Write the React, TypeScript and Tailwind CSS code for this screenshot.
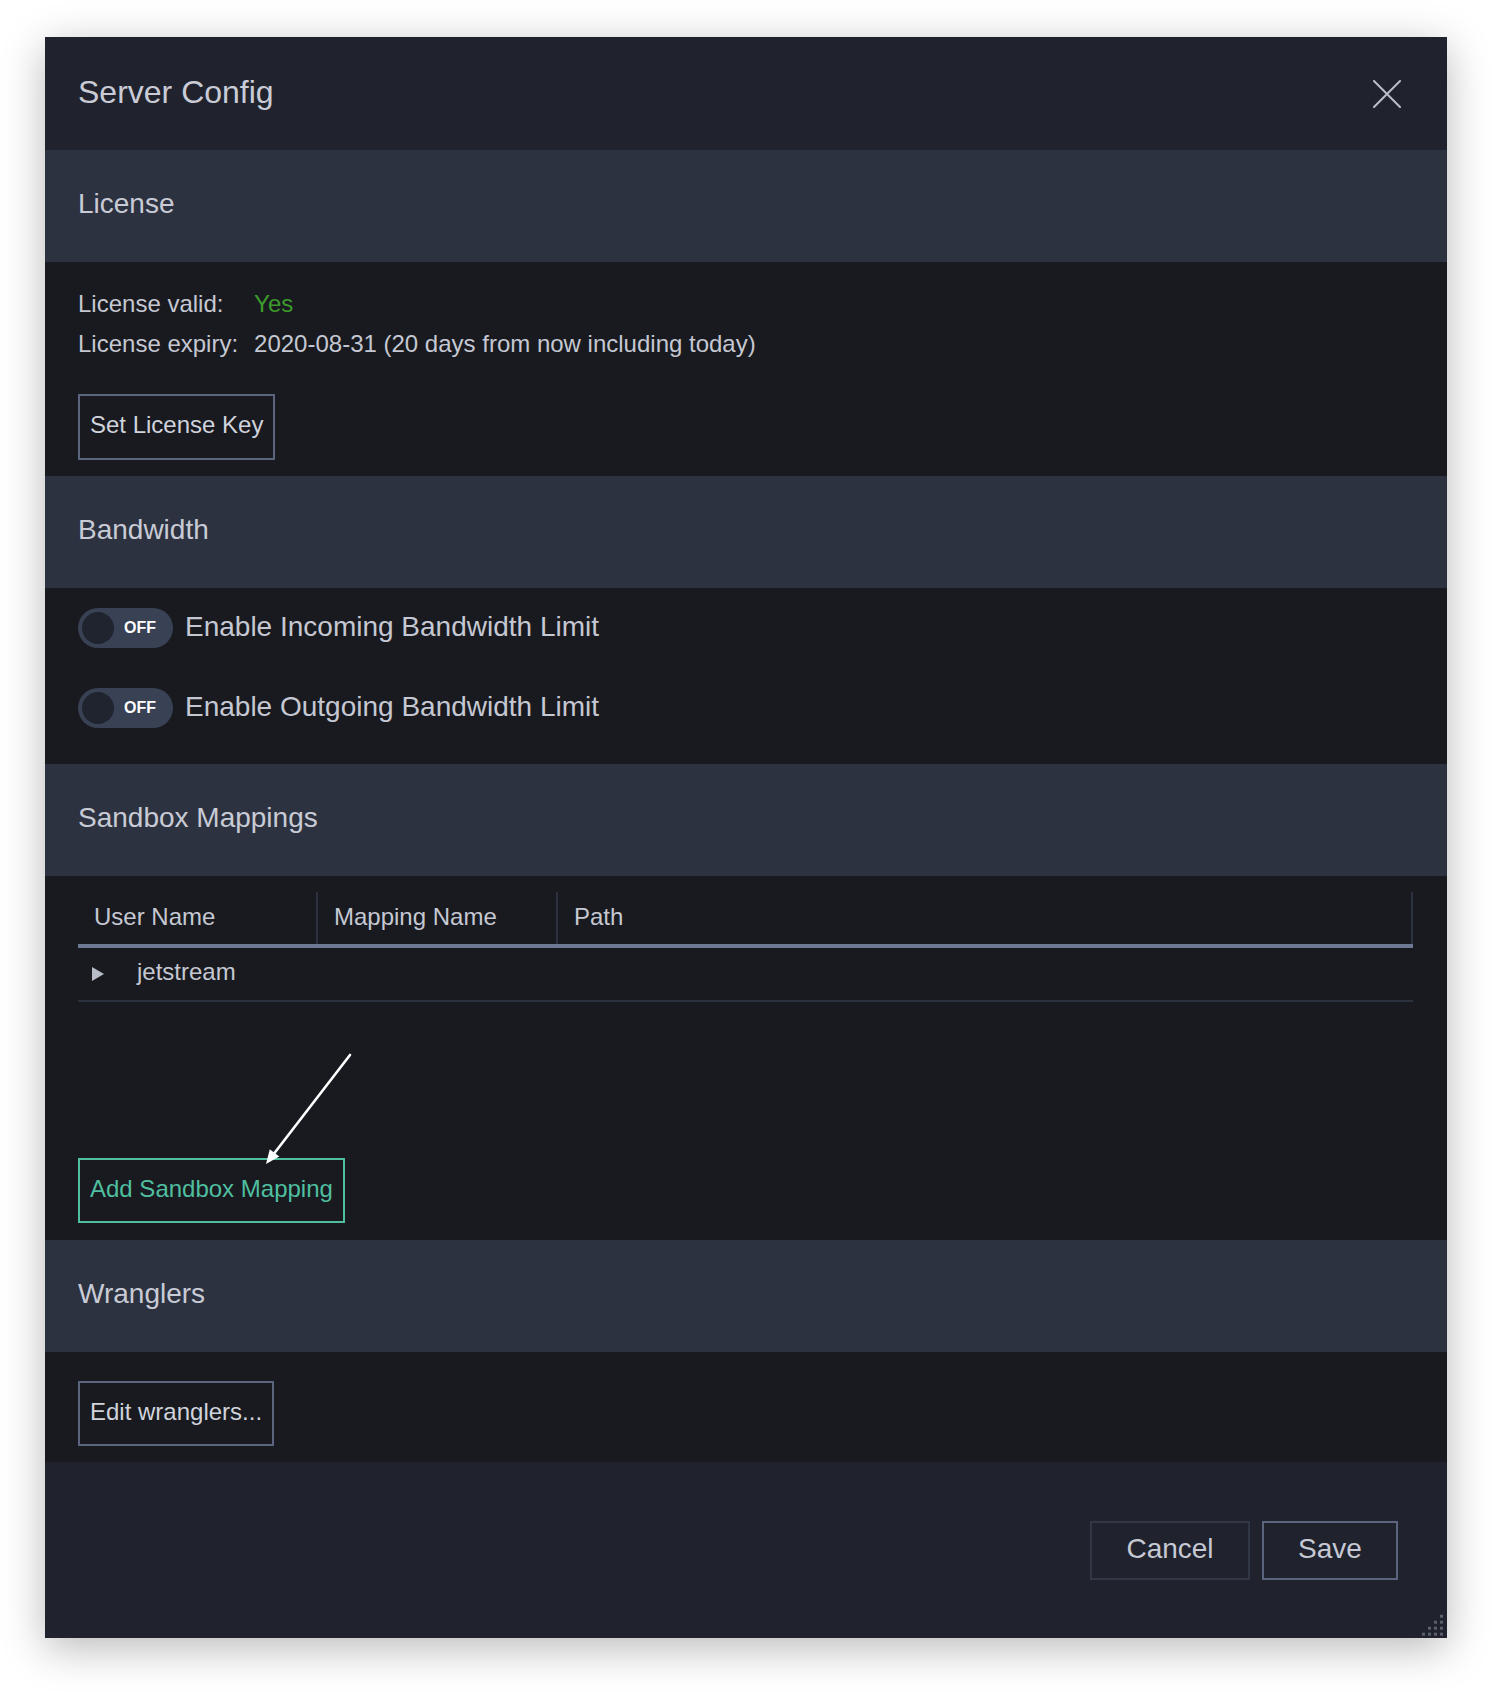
import React from 'react';

const SectionHeader: React.FC<{ title: string }> = ({ title }) => (
  <div className="h-[112px] flex items-center px-[33px] pb-1 bg-[#2d3240]">
    <h2 className="text-[28px] leading-none text-[#c8cbd5]">{title}</h2>
  </div>
);

const Toggle: React.FC<{ label: string }> = ({ label }) => (
  <div className="h-[40px] flex items-center">
    <div className="w-[95px] h-[40px] rounded-full bg-[#394154] flex items-center pl-1">
      <div className="w-[32px] h-[32px] rounded-full bg-[#20242e]" />
      <span className="ml-[10px] text-[16px] font-bold leading-none text-white">OFF</span>
    </div>
    <span className="ml-3 pb-[2px] text-[28px] leading-none text-[#c5c8d2]">{label}</span>
  </div>
);

const OutlineButton: React.FC<{ children: React.ReactNode; className?: string }> = ({ children, className }) => (
  <button className={'h-[65px] px-[10px] pb-[4px] border-2 text-[24px] leading-none ' + (className ?? '')}>
    {children}
  </button>
);

export default function App() {
  return (
    <div className="min-h-[1692px] bg-white pl-[45px] pr-[45px] pt-[37px] pb-[54px] font-['Liberation_Sans',Arial,sans-serif]">
      <div className="relative w-[1402px] flex flex-col bg-[#181a1f] shadow-[0_10px_40px_rgba(0,0,0,0.28)]">
        {/* title bar */}
        <div className="h-[113px] flex items-center justify-between pl-[33px] pr-[46px] bg-[#20232d]">
          <h1 className="text-[32px] leading-none text-[#c9ccd6] pb-1">Server Config</h1>
          <svg width="28" height="28" viewBox="0 0 28 28" className="text-[#b9bdc8]">
            <path d="M1 1 L27 27 M27 1 L1 27" stroke="currentColor" strokeWidth="2" strokeLinecap="round" />
          </svg>
        </div>

        {/* License */}
        <SectionHeader title="License" />
        <div className="px-[33px] pt-[21px] pb-[16px] text-[24px] text-[#c5c8d2]">
          <div className="grid grid-cols-[auto_1fr] gap-x-4">
            <div className="h-[41px] flex items-center">License valid:</div>
            <div className="h-[41px] flex items-center text-[#3d9a2b]">Yes</div>
            <div className="h-[41px] flex items-center pb-[2px]">License expiry:</div>
            <div className="h-[41px] flex items-center pb-[2px]">2020-08-31 (20 days from now including today)</div>
          </div>
          <OutlineButton className="mt-[29px] h-[66px] border-[#5b6580] text-[#d0d3dc]">Set License Key</OutlineButton>
        </div>

        {/* Bandwidth */}
        <SectionHeader title="Bandwidth" />
        <div className="px-[33px] pt-[20px] pb-[36px] flex flex-col gap-10">
          <Toggle label="Enable Incoming Bandwidth Limit" />
          <Toggle label="Enable Outgoing Bandwidth Limit" />
        </div>

        {/* Sandbox Mappings */}
        <SectionHeader title="Sandbox Mappings" />
        <div className="relative pl-[33px] pr-[34px] pt-[16px] pb-[17px] text-[24px] text-[#c5c8d2]">
          <div className="grid grid-cols-[238px_240px_1fr] border-b-4 border-[#6d7893] h-[56px]">
            <div className="flex items-center pl-4 pb-[2px]">User Name</div>
            <div className="flex items-center pl-4 pb-[2px] border-l-2 border-[#2c3140]">Mapping Name</div>
            <div className="flex items-center pl-4 pb-[2px] border-l-2 border-r-2 border-[#2c3140]">Path</div>
          </div>
          <div className="h-[54px] flex items-center border-b-2 border-[#2c3140] pl-[13px] pb-1">
            <svg width="14" height="14" viewBox="0 0 14 14" className="mt-1">
              <polygon points="1,0 13,7 1,14" fill="#b8bcc8" />
            </svg>
            <span className="ml-[32px]">jetstream</span>
          </div>
          <OutlineButton className="mt-[156px] border-[#4fbf9f] text-[#4fbf9f]">Add Sandbox Mapping</OutlineButton>
          <svg
            width="100"
            height="125"
            viewBox="0 0 100 125"
            className="absolute left-[215px] top-[170px]"
          >
            <line x1="90" y1="9" x2="14.5" y2="107" stroke="white" strokeWidth="2.6" strokeLinecap="round" />
            <polygon points="6,118 19.3,110.6 9.8,103.2" fill="white" />
          </svg>
        </div>

        {/* Wranglers */}
        <SectionHeader title="Wranglers" />
        <div className="px-[33px] pt-[29px] pb-[16px]">
          <OutlineButton className="border-[#5b6580] text-[#d0d3dc]">Edit wranglers...</OutlineButton>
        </div>

        {/* footer */}
        <div className="h-[176px] flex items-center justify-end gap-3 pr-[49px] bg-[#20232d]">
          <button className="w-[160px] h-[59px] pb-[2px] border-2 border-[#323746] text-[28px] leading-none text-[#c6c9d3]">
            Cancel
          </button>
          <button className="w-[136px] h-[59px] pb-[2px] border-2 border-[#5b6580] text-[28px] leading-none text-[#c6c9d3]">
            Save
          </button>
        </div>

        {/* resize grip */}
        <svg width="24" height="24" viewBox="0 0 24 24" className="absolute right-[3px] bottom-[2px]">
          {[0, 1, 2, 3].map((row) =>
            [0, 1, 2, 3]
              .filter((col) => col >= 3 - row)
              .map((col) => (
                <rect key={row + '-' + col} x={2 + col * 6} y={2.7 + row * 6} width="3" height="3" fill="#5a5f6b" />
              ))
          )}
        </svg>
      </div>
    </div>
  );
}
